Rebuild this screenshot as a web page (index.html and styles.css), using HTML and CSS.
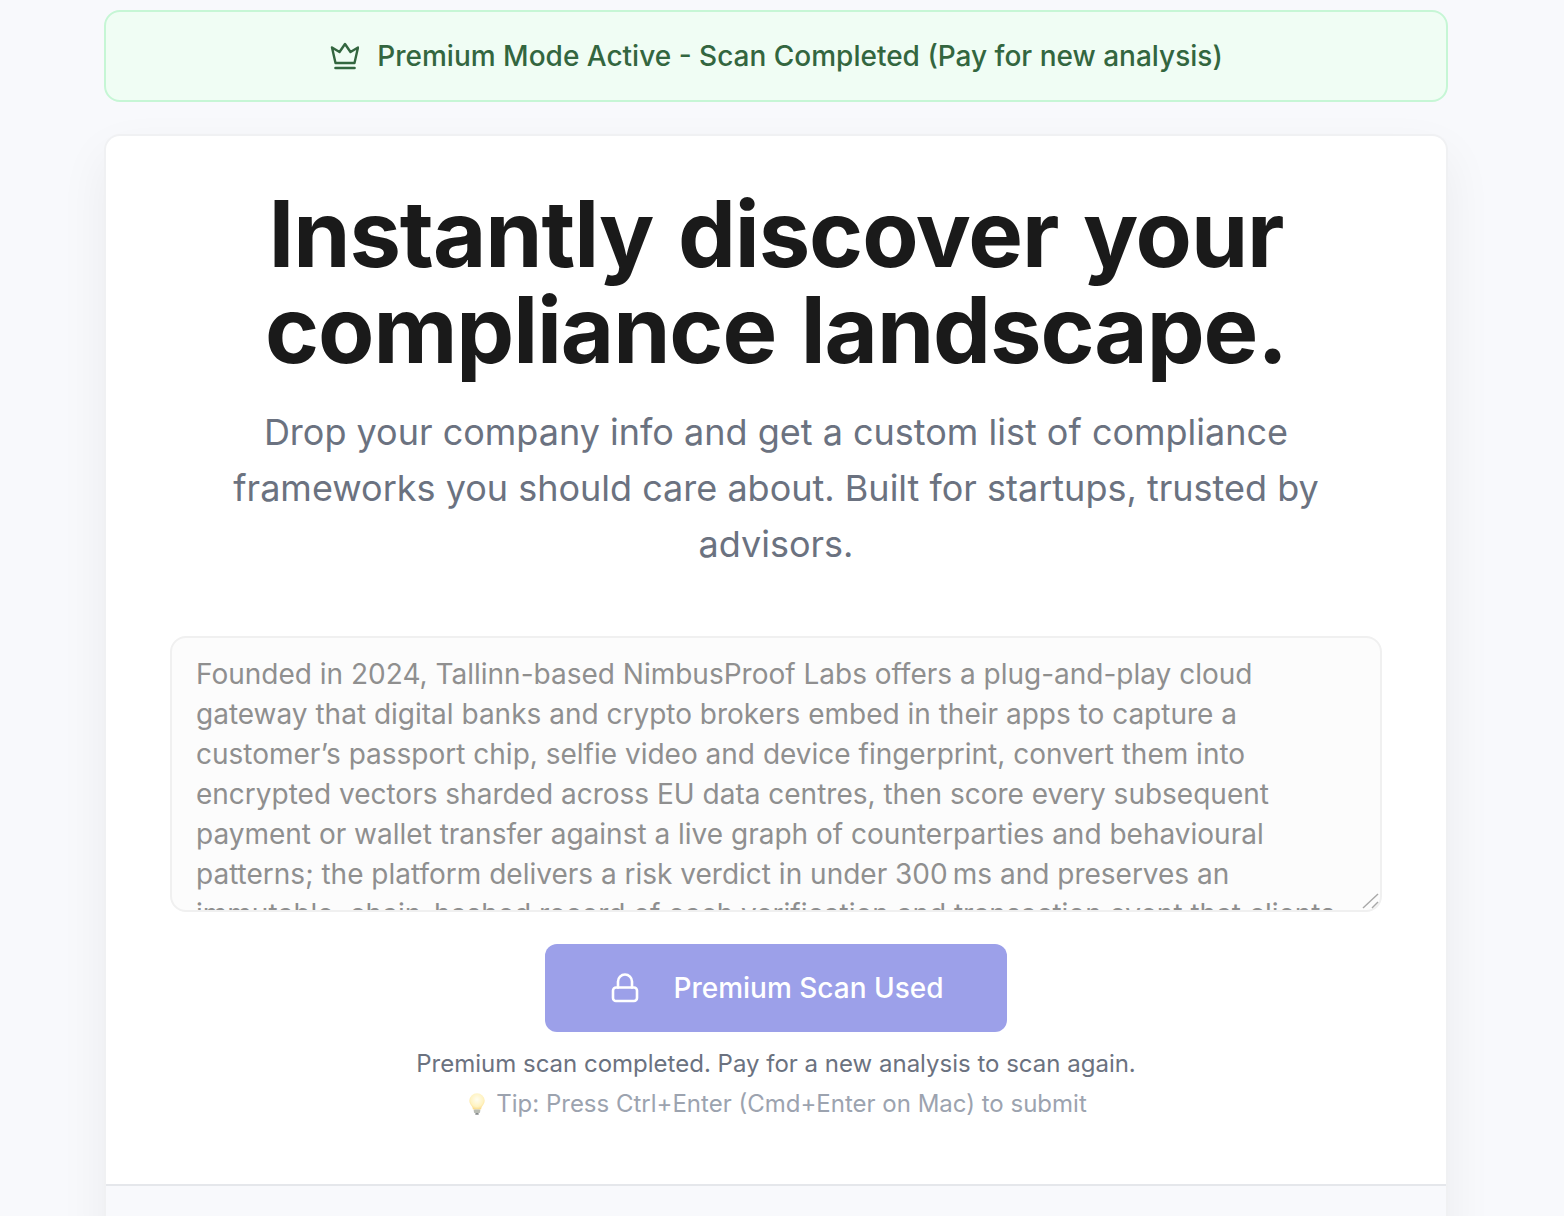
FILE: index.html
```html
<!DOCTYPE html>
<html lang="en">
<head>
    <meta charset="UTF-8">
    <meta name="viewport" content="width=device-width, initial-scale=1.0">
    <title>Compliance Scan</title>
    <link rel="stylesheet" href="styles.css">
</head>
<body>

    <div class="container">
        <div class="premium-banner">
            <svg class="crown-icon" viewBox="-1 0 30 28" fill="none" stroke="currentColor" stroke-width="2.4" stroke-linejoin="round" stroke-linecap="round">
                <path d="M5.500 21 2 5.500 9.500 10 15 2 20.500 10 28 5.500 24.500 21Z"></path>
                <path d="M5.500 26h19" stroke-width="2.600"></path>
            </svg>
            <span>Premium Mode Active - Scan Completed (Pay for new analysis)</span>
        </div>

        <div class="card">
            <div class="hero">
                <h1>Instantly discover your compliance landscape.</h1>
                <p class="subtitle">Drop your company info and get a custom list of compliance frameworks you should care about. Built for startups, trusted by advisors.</p>

                <div class="input-wrap">
                    <textarea class="company-input" readonly>Founded in 2024, Tallinn-based NimbusProof Labs offers a plug-and-play cloud gateway that digital banks and crypto brokers embed in their apps to capture a customer’s passport chip, selfie video and device fingerprint, convert them into encrypted vectors sharded across EU data centres, then score every subsequent payment or wallet transfer against a live graph of counterparties and behavioural patterns; the platform delivers a risk verdict in under 300&#8239;ms and preserves an immutable, chain-hashed record of each verification and transaction event that clients can export for audits.</textarea>
                    <svg class="resize-handle" viewBox="0 0 18 18" fill="none" stroke="#a8a8a8" stroke-width="1.400">
                        <path d="M1 16 16 2"></path>
                        <path d="M10 16l6-6"></path>
                    </svg>
                </div>

                <button class="scan-button" type="button">
                    <svg class="lock-icon" viewBox="0 0 28 30" fill="none" stroke="currentColor" stroke-width="2.600" stroke-linecap="round" stroke-linejoin="round">
                        <rect x="2" y="14.500" width="24" height="13.500" rx="3"></rect>
                        <path d="M7 14.500V8.500a7 7 0 0 1 14 0V14.500"></path>
                    </svg>
                    <span>Premium Scan Used</span>
                </button>

                <p class="scan-note">Premium scan completed. Pay for a new analysis to scan again.</p>
                <p class="scan-tip">
                    <svg class="bulb-icon" viewBox="0 0 20 26">
                        <defs>
                            <radialGradient id="bulbGlow" cx="50%" cy="40%" r="60%">
                                <stop offset="0%" stop-color="#fffdf0"></stop>
                                <stop offset="70%" stop-color="#fff3c2"></stop>
                                <stop offset="100%" stop-color="#fbdc8a"></stop>
                            </radialGradient>
                        </defs>
                        <path d="M10 1a8.500 8.500 0 0 0-8.500 8.500c0 3.500 2.500 5 3.500 7.500l.5 2h9l.5-2c1-2.500 3.500-4 3.500-7.500A8.500 8.500 0 0 0 10 1Z" fill="url(#bulbGlow)"></path>
                        <rect x="6.500" y="19" width="7" height="4" rx="1" fill="#b9bcb4"></rect>
                        <rect x="8" y="23" width="4" height="2" rx="1" fill="#85898a"></rect>
                    </svg>
                    <span>Tip: Press Ctrl+Enter (Cmd+Enter on Mac) to submit</span>
                </p>
            </div>
            <div class="card-footer"></div>
        </div>
    </div>

</body>
</html>
```

FILE: styles.css
```css
html, body {
    height: 100%;
    overflow: hidden;
}

body {
    font-family: Inter, "Liberation Sans", sans-serif;
    background-color: #f8f9fc;
    margin: 0;
}

.container {
    width: 1344px;
    margin-left: 104px;
    padding-top: 10px;
}

.premium-banner {
    display: flex;
    justify-content: center;
    align-items: center;
    gap: 18px;
    height: 92px;
    box-sizing: border-box;
    background-color: #f0fdf4;
    border: 2px solid #c6f6d5;
    border-radius: 16px;
    color: #33663f;
    font-size: 28px;
    font-weight: 500;
    margin-bottom: 32px;
}

.crown-icon {
    width: 30px;
    height: 28px;
}

.card {
    background-color: #ffffff;
    border: 2px solid #f0f1f3;
    border-bottom: none;
    border-radius: 16px 16px 0 0;
    box-shadow: 0 20px 50px rgba(0, 0, 0, 0.06);
}

.hero {
    height: 1050px;
    box-sizing: border-box;
    padding: 50px 64px 0;
    text-align: center;
    border-bottom: 2px solid #e5e7eb;
}

h1 {
    margin: 0 auto 26px;
    font-size: 92px;
    line-height: 96px;
    font-weight: 700;
    letter-spacing: -1.100px;
    word-spacing: 4px;
    color: #1a1a1a;
}

.subtitle {
    margin: 0 auto 64px;
    max-width: 1100px;
    font-size: 36px;
    line-height: 56px;
    color: #6b7280;
}

.input-wrap {
    position: relative;
    margin-bottom: 32px;
}

.company-input {
    display: block;
    width: 100%;
    height: 276px;
    box-sizing: border-box;
    padding: 16px 24px;
    background-color: #fcfcfc;
    border: 2px solid #f0f0f0;
    border-radius: 16px;
    font-family: inherit;
    font-size: 28px;
    line-height: 40px;
    color: #8f8f8f;
    outline: none;
    overflow: hidden;
    resize: none;
}

.resize-handle {
    position: absolute;
    right: 2px;
    bottom: 2px;
    width: 18px;
    height: 18px;
}

.scan-button {
    display: flex;
    justify-content: center;
    align-items: center;
    gap: 34px;
    width: 462px;
    height: 88px;
    margin: 0 auto 12px;
    padding: 0 0 0 3px;
    background-color: #9ca0e9;
    border: none;
    border-radius: 12px;
    color: #ffffff;
    font-family: inherit;
    font-size: 28px;
    font-weight: 500;
}

.lock-icon {
    width: 28px;
    height: 30px;
}

.scan-note, .scan-tip {
    margin: 0;
    font-size: 24px;
    line-height: 40px;
}

.scan-note {
    color: #6b7280;
}

.scan-tip {
    display: flex;
    justify-content: center;
    align-items: center;
    gap: 10px;
    padding-left: 3px;
    color: #9ca3af;
}

.bulb-icon {
    width: 18px;
    height: 24px;
}

.card-footer {
    height: 60px;
    background-color: #f8f9fc;
}
```
